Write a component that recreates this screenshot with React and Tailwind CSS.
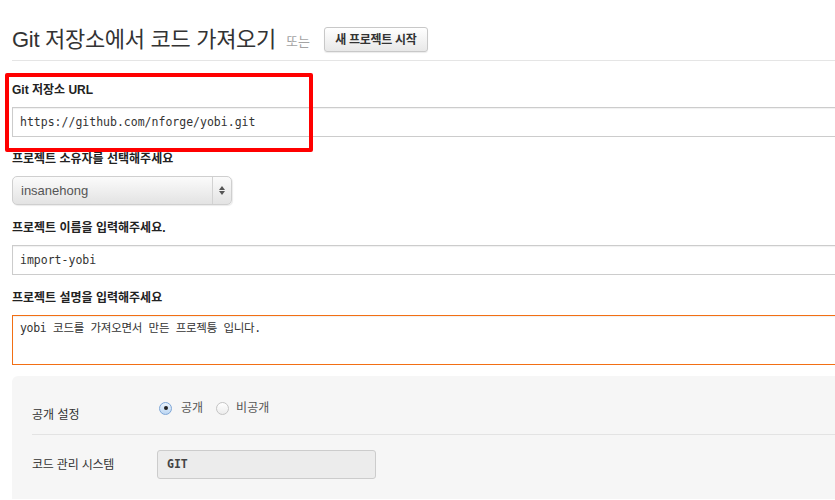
const sans = { fontFamily: '"Liberation Sans", "Noto Sans CJK KR", sans-serif' };

const Radio = ({ checked }) => (
  <span
    className={`relative inline-block h-[13px] w-[13px] rounded-full border ${
      checked
        ? "border-[#7ea6d6] bg-gradient-to-b from-[#eaf3fc] to-[#bcd6f2]"
        : "border-[#c4c4c4] bg-gradient-to-b from-white to-[#ececec]"
    }`}
  >
    {checked && (
      <span className="absolute left-[3.5px] top-[3.5px] h-[4px] w-[4px] rounded-full bg-[#222]" />
    )}
  </span>
);

const Label = ({ children }) => (
  <div className="h-[18px] leading-[18px] mb-[8px] text-[12px] font-bold text-[#222]">
    {children}
  </div>
);

const monoInput =
  "w-[900px] border border-[#cccccc] bg-white px-[7px] text-[11.5px] text-[#333] shadow-[inset_0_1px_1px_rgba(0,0,0,0.06)] [font-family:'DejaVu_Sans_Mono','Noto_Sans_CJK_KR',monospace]";

export default function App() {
  return (
    <div className="relative w-[835px] h-[500px] overflow-hidden bg-white" style={sans}>
      <div className="pl-[12px] w-[950px]">
        {/* Header */}
        <div className="mt-[27px] h-[25px] flex items-center">
          <h1 className="text-[22px] text-[#333] tracking-[-0.3px] leading-[25px]">
            Git 저장소에서 코드 가져오기
          </h1>
          <span className="ml-[10px] text-[13px] text-[#a3a3a3] mt-[4px]">또는</span>
          <button className="ml-[14px] h-[25px] w-[104px] rounded-[3px] border border-[#c8c8c8] bg-gradient-to-b from-white to-[#e8e8e8] text-[12px] font-bold text-[#333] shadow-[0_1px_1px_rgba(0,0,0,0.08)] tracking-[-0.3px]">
            새 프로젝트 시작
          </button>
        </div>
        <div className="mt-[8px] border-t border-[#e5e5e5]" />

        {/* Git URL */}
        <div className="mt-[20px]">
          <Label>Git 저장소 URL</Label>
          <div className={`${monoInput} h-[30px] leading-[28px]`}>
            https://github.com/nforge/yobi.git
          </div>
        </div>

        {/* Owner */}
        <div className="mt-[13px]">
          <Label>프로젝트 소유자를 선택해주세요</Label>
          <div className="flex h-[29px] w-[220px] items-center rounded-[5px] border border-[#cfcfcf] bg-gradient-to-b from-[#fbfbfb] to-[#e3e3e3] shadow-[1px_1px_1px_rgba(0,0,0,0.08)]">
            <span className="flex-1 pl-[8px] text-[13px] text-[#555]">insanehong</span>
            <span className="flex h-full w-[19px] flex-col items-center justify-center gap-[1px] border-l border-[#d2d2d2]">
              <svg width="6" height="4" viewBox="0 0 6 4">
                <path d="M3 0 L6 4 L0 4 Z" fill="#555" />
              </svg>
              <svg width="6" height="4" viewBox="0 0 6 4">
                <path d="M0 0 L6 0 L3 4 Z" fill="#555" />
              </svg>
            </span>
          </div>
        </div>

        {/* Name */}
        <div className="mt-[14px]">
          <Label>프로젝트 이름을 입력해주세요.</Label>
          <div className={`${monoInput} h-[30px] leading-[28px]`}>import-yobi</div>
        </div>

        {/* Description */}
        <div className="mt-[14px]">
          <Label>프로젝트 설명을 입력해주세요</Label>
          <div className={`${monoInput} h-[50px] pt-[3px] leading-[18px] !border-[#f26f14] tracking-[-0.3px]`}>
            yobi 코드를 가져오면서 만든 프로젝틍 입니다.
          </div>
        </div>

        {/* Settings panel */}
        <div className="mt-[11px] rounded-tl-[6px] bg-[#f6f6f6] pl-[20px]">
          <div className="flex h-[59px] items-start pt-[24px] border-b border-[#e3e3e3]">
            <span className="w-[127px] mt-[7px] leading-[16px] text-[12px] text-[#333]">
              공개 설정
            </span>
            <div className="flex h-[16px] items-center text-[12px] text-[#555]">
              <Radio checked />
              <span className="ml-[9px]">공개</span>
              <span className="ml-[13px] flex items-center">
                <Radio />
              </span>
              <span className="ml-[7px]">비공개</span>
            </div>
          </div>
          <div className="flex items-center pt-[15px] pb-[20px]">
            <span className="w-[125px] text-[12px] text-[#333] tracking-[-0.2px]">코드 관리 시스템</span>
            <div className="h-[29px] w-[219px] rounded-[3px] border border-[#cccccc] bg-[#ececec] pl-[9px] leading-[27px] text-[11.5px] font-bold text-[#444] [font-family:'DejaVu_Sans_Mono',monospace]">
              GIT
            </div>
          </div>
        </div>
      </div>

      {/* Annotation box */}
      <div className="absolute left-[5px] top-[73px] h-[79px] w-[308px] rounded-[2px] border-[4px] border-[#ff0000]" />
    </div>
  );
}
